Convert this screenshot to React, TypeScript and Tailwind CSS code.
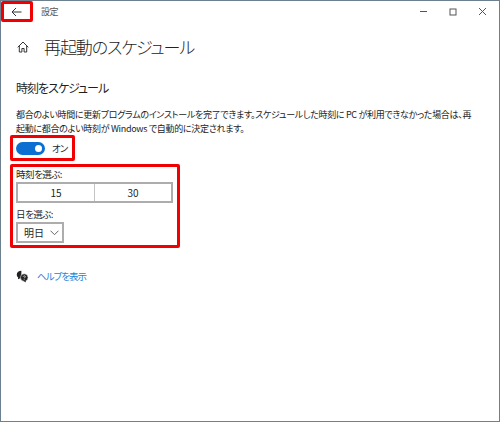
export default function App() {
  const font = { fontFamily: '"Noto Sans CJK JP", "Liberation Sans", sans-serif' };
  return (
    <div className="relative w-[500px] h-[422px] bg-white border border-[#6d8090] flex flex-col text-[#1f1f1f] overflow-hidden [font-feature-settings:'palt']" style={font}>
      <div className="h-[21px] flex items-center shrink-0">
        <div className="w-[30px] flex justify-center pl-[1px]">
          <svg width="11" height="10" viewBox="0 0 11 10" fill="none" stroke="#333" strokeWidth="1"><path d="M10.5 5H1M5 1 1 5l4 4" /></svg>
        </div>
        <span className="ml-[10px] text-[9px] tracking-[-0.5px] text-[#555]">設定</span>
        <div className="ml-auto flex items-center text-[#555]">
          <svg width="9" height="9" viewBox="0 0 9 9" stroke="#555" fill="none"><path d="M1 4.5h7" /></svg>
          <svg className="ml-[21px]" width="8" height="8" viewBox="0 0 8 8" stroke="#555" fill="none"><rect x="1" y="1" width="6" height="6" /></svg>
          <svg className="ml-[21px] mr-[12px]" width="9" height="9" viewBox="0 0 9 9" stroke="#555" fill="none"><path d="M1 1l7 7M8 1 1 8" /></svg>
        </div>
      </div>
      <div className="pl-[15px] flex flex-col">
        <div className="flex items-center mt-[11px] h-[28px]">
          <svg className="ml-[1px]" width="12" height="12" viewBox="0 0 12 12" fill="none" stroke="#333" strokeWidth="1"><path d="M.7 6.3 6 1l5.3 5.3M2.3 5v6h2.6V7.5h2.2V11h2.6V5" /></svg>
          <span className="ml-[15px] text-[17px] tracking-[-1.1px] leading-[28px] text-[#222] font-light">再起動のスケジュール</span>
        </div>
        <div className="mt-[17px] text-[12px] tracking-[-1px] leading-[20px]">時刻をスケジュール</div>
        <p className="mt-[10px] w-[480px] text-[9px] tracking-[-0.3px] leading-[14px] text-[#222] whitespace-nowrap">
          都合のよい時間に更新プログラムのインストールを完了できます。スケジュールした時刻に PC が利用できなかった場合は、再<br />起動に都合のよい時刻が Windows で自動的に決定されます。
        </p>
        <div className="mt-[5px] flex items-center h-[14px]">
          <div className="w-[29px] h-[13px] rounded-full bg-[#0a6fd0] flex items-center justify-end pr-[3px]">
            <div className="w-[7px] h-[7px] rounded-full bg-white" />
          </div>
          <span className="ml-[7px] text-[9.5px] tracking-[-1px]">オン</span>
        </div>
        <div className="mt-[12px] text-[9.5px] tracking-[-0.5px] leading-[14px]">時刻を選ぶ:</div>
        <div className="mt-[1px] w-[157px] h-[21px] border-2 border-[#adadad] flex text-[10px] items-center">
          <div className="w-[77px] h-full flex items-center justify-center border-r border-[#c4c4c4]">15</div>
          <div className="flex-1 flex items-center justify-center">30</div>
        </div>
        <div className="mt-[4px] text-[9.5px] tracking-[-0.5px] leading-[14px]">日を選ぶ:</div>
        <div className="mt-[1px] w-[48px] h-[21px] border-2 border-[#adadad] flex items-center text-[10px]">
          <span className="ml-[6px]">明日</span>
          <svg className="ml-[6px]" width="9" height="6" viewBox="0 0 9 6" fill="none" stroke="#666"><path d="M.5.7 4.5 4.7 8.5.7" /></svg>
        </div>
        <div className="mt-[26px] flex items-center h-[14px]">
          <svg width="13" height="13" viewBox="0 0 12 12"><path d="M5 .8C2.6.8.7 2.3.7 4.3c0 1 .5 1.9 1.3 2.5L1.8 8.6l2.2-1h.8z" fill="#222" /><circle cx="7.6" cy="7" r="3.5" fill="#222" stroke="#fff" strokeWidth=".5" /><path d="M7 10l2 1.6V9.5z" fill="#222" /><path d="M6.6 6.1c.3-1 2-1 2 .1 0 .7-1 .8-1 1.5M7.6 8.6v.6" fill="none" stroke="#fff" strokeWidth=".7" /></svg>
          <span className="ml-[8px] text-[9.5px] tracking-[-1px] text-[#1a86d8]">ヘルプを表示</span>
        </div>
      </div>
      <div className="absolute left-[0px] top-[0px] w-[32px] h-[21px] border-[3px] border-[#f00000] rounded-[2px]" />
      <div className="absolute left-[9px] top-[134px] w-[65px] h-[26px] border-[3px] border-[#f00000] rounded-[2px]" />
      <div className="absolute left-[9px] top-[163px] w-[170px] h-[84px] border-[3px] border-[#f00000] rounded-[2px]" />
    </div>
  );
}
